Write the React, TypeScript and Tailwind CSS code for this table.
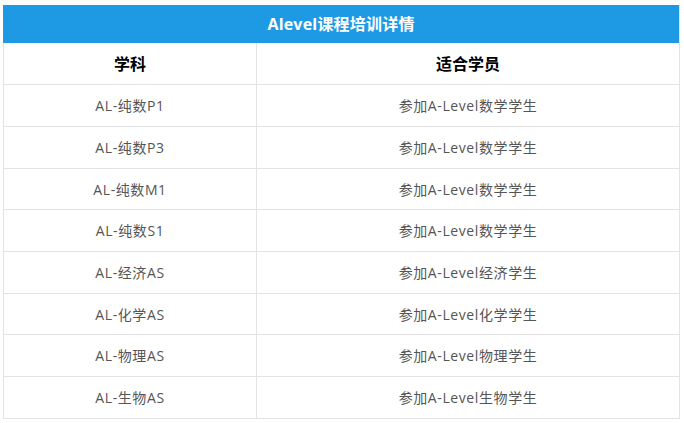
import React from 'react';

const rows: [string, string][] = [
  ['AL-纯数P1', '参加A-Level数学学生'],
  ['AL-纯数P3', '参加A-Level数学学生'],
  ['AL-纯数M1', '参加A-Level数学学生'],
  ['AL-纯数S1', '参加A-Level数学学生'],
  ['AL-经济AS', '参加A-Level经济学生'],
  ['AL-化学AS', '参加A-Level化学学生'],
  ['AL-物理AS', '参加A-Level物理学生'],
  ['AL-生物AS', '参加A-Level生物学生'],
];

const App: React.FC = () => {
  return (
    <div className="w-[684px] h-[423px] bg-white pt-[5px] pl-[3px] font-['Open_Sans','Noto_Sans_CJK_SC',sans-serif]">
      <div className="w-[677px] border-r border-[#e3e3e3]">
        <div className="h-[38px] bg-[#1e9ae5] flex items-center justify-center text-white font-bold text-[16px] tracking-[0.2px]">
          Alevel课程培训详情
        </div>
        <div className="border-l border-[#e3e3e3]">
          <div className="grid grid-cols-[253px_1fr] h-[42px] border-b border-[#e3e3e3] text-[16px] font-bold text-black">
            <div className="flex items-center justify-center border-r border-[#e3e3e3]">学科</div>
            <div className="flex items-center justify-center">适合学员</div>
          </div>
          {rows.map(([subject, who], i) => (
            <div
              key={subject}
              className={`grid grid-cols-[253px_1fr] border-b border-[#e3e3e3] text-[14px] text-[#555555] tracking-[0.6px] ${
                i === 2 || i === 5 ? 'h-[41px]' : 'h-[42px]'
              }`}
            >
              <div className="flex items-center justify-center border-r border-[#e3e3e3]">{subject}</div>
              <div className="flex items-center justify-center">{who}</div>
            </div>
          ))}
        </div>
      </div>
    </div>
  );
};

export default App;
